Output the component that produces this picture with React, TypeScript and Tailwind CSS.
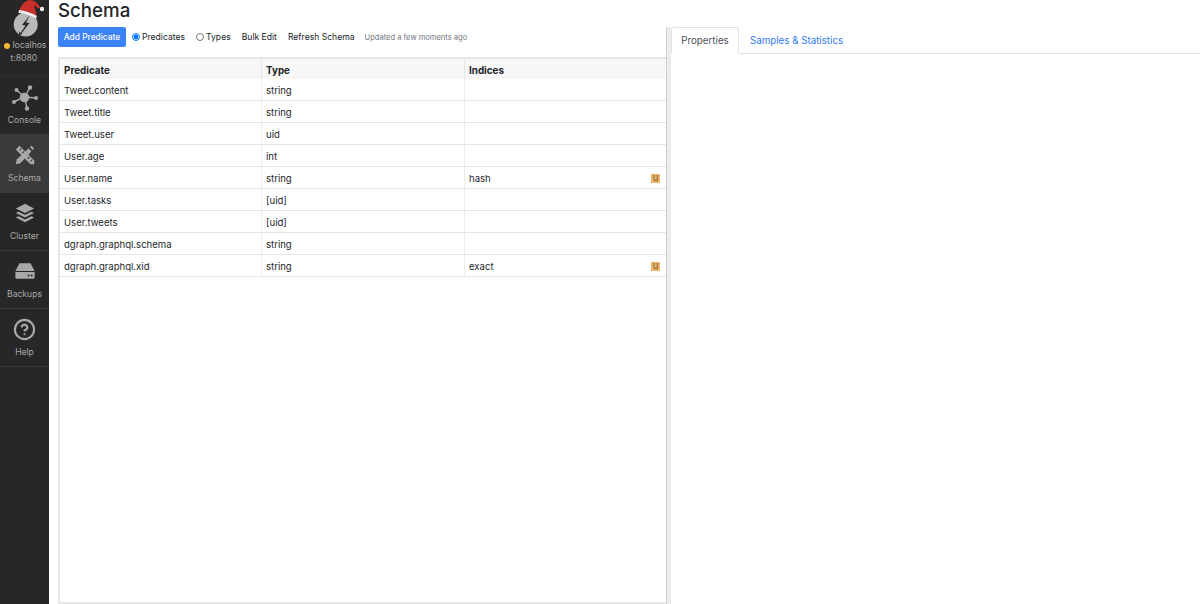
import { HelpCircle } from 'lucide-react';

const rows = [
    { predicate: 'Tweet.content', type: 'string', indices: '' },
    { predicate: 'Tweet.title', type: 'string', indices: '' },
    { predicate: 'Tweet.user', type: 'uid', indices: '' },
    { predicate: 'User.age', type: 'int', indices: '' },
    { predicate: 'User.name', type: 'string', indices: 'hash', upsert: true },
    { predicate: 'User.tasks', type: '[uid]', indices: '' },
    { predicate: 'User.tweets', type: '[uid]', indices: '' },
    { predicate: 'dgraph.graphql.schema', type: 'string', indices: '' },
    { predicate: 'dgraph.graphql.xid', type: 'string', indices: 'exact', upsert: true },
];

function Logo() {
    return (
        <svg viewBox="0 0 48 40" className="w-[48px] h-[40px] block" aria-hidden>
            <circle cx="24.7" cy="24.5" r="12" fill="#b8b8b8" />
            <path d="M29 15 L21 25 L24.5 25.5 L19.5 33 L18 31.5 L18 35 L21 34.5 L20.5 33.5 L28.5 23 L25 22.5 Z" fill="#2a2a2a" />
            <path d="M18 11 C20 5 24 0 29 0 C33 0 37 3 39.5 8 L36.5 8 C35 6 33.5 5.5 33 6 C34 9 35 12 35.5 16 Z" fill="#c9302c" />
            <path d="M18 10 C24 10.5 30 12.5 36 16 L35 18.5 C29 15 23.5 13.5 17.5 13 Z" fill="#ececec" />
            <circle cx="41" cy="9" r="2.2" fill="#ececec" />
        </svg>
    );
}

function ConsoleIcon() {
    return (
        <svg viewBox="0 0 26 26" className="w-[26px] h-[26px] mt-[1px]" fill="#a8a8a8" stroke="#a8a8a8" aria-hidden>
            <path d="M12.5 12 L18 2.5 M12.5 12 L24 13 M12.5 12 L15 23.5 M12.5 12 L1.5 17 M12.5 12 L4.5 5" strokeWidth="1.4" />
            <circle cx="12.5" cy="12.5" r="4.8" stroke="none" />
            <circle cx="18" cy="2.5" r="2.2" stroke="none" />
            <circle cx="24" cy="13" r="2" stroke="none" />
            <circle cx="15" cy="23.5" r="2.2" stroke="none" />
            <circle cx="2" cy="17" r="2" stroke="none" />
            <circle cx="4.5" cy="5" r="2" stroke="none" />
        </svg>
    );
}

function SchemaIcon() {
    return (
        <svg viewBox="0 0 24 24" className="w-[22px] h-[22px]" fill="#a8a8a8" aria-hidden>
            <path d="M2 6 L6 2 L22 18 L22 22 L18 22 Z" />
            <path d="M22 5 L19 2 L3 17 L2 22 L7 21 Z" />
            <path d="M17 3 L21 7 L19.5 8.5 L15.5 4.5 Z" fill="#3a3a3a" />
            <path d="M8 5 L6 7 M11 8 L9 10 M17 14 L15 16 M20 17 L18 19" stroke="#3a3a3a" strokeWidth="1.2" />
        </svg>
    );
}

function ClusterIcon() {
    return (
        <svg viewBox="0 0 24 24" className="w-[22px] h-[22px]" fill="#a8a8a8" aria-hidden>
            <path d="M12 2 L22 7 L12 12 L2 7 Z" />
            <path d="M5 10.5 L12 14 L19 10.5 L22 12 L12 17 L2 12 Z" />
            <path d="M5 15.5 L12 19 L19 15.5 L22 17 L12 22 L2 17 Z" />
        </svg>
    );
}

function BackupsIcon() {
    return (
        <svg viewBox="0 0 24 24" className="w-[22px] h-[22px]" aria-hidden>
            <path d="M6 3.5 H18 L22.5 12 H1.5 Z" fill="#a8a8a8" />
            <path d="M1.5 13 H22.5 V19 Q22.5 20.5 21 20.5 H3 Q1.5 20.5 1.5 19 Z" fill="#a8a8a8" />
            <circle cx="16" cy="16.8" r="1.1" fill="#262626" />
            <circle cx="19.3" cy="16.8" r="1.1" fill="#262626" />
        </svg>
    );
}

function NavItem({ label, active, children }: { label: string; active?: boolean; children: React.ReactNode }) {
    return (
        <div className={`h-[58px] flex flex-col items-center pt-[8px] border-b border-[#3b3b3b] ${active ? 'bg-[#3a3a3a]' : ''}`}>
            <div className="h-[24px] flex items-center justify-center">{children}</div>
            <span className="mt-[5px] text-[8.6px] leading-[12px] text-[#a8a8a8]">{label}</span>
        </div>
    );
}

function Sidebar() {
    return (
        <div className="w-[49px] shrink-0 bg-[#272727] flex flex-col">
            <div className="h-[77px] border-b border-[#303030] flex flex-col items-center">
                <Logo />
                <div className="w-[48px] -mt-[1px] text-[8.6px] leading-[13px] text-[#a8a8a8] whitespace-nowrap">
                    <div className="flex items-center pl-[3px]">
                        <span className="w-[6px] h-[6px] rounded-full bg-[#f5b82e] mr-[3px]" />
                        localhos
                    </div>
                    <div className="pl-[10px]">t:8080</div>
                </div>
            </div>
            <NavItem label="Console"><ConsoleIcon /></NavItem>
            <NavItem label="Schema" active><SchemaIcon /></NavItem>
            <NavItem label="Cluster"><ClusterIcon /></NavItem>
            <NavItem label="Backups"><BackupsIcon /></NavItem>
            <NavItem label="Help"><HelpCircle className="w-[23px] h-[23px] text-[#a8a8a8]" strokeWidth={2.2} /></NavItem>
        </div>
    );
}

function Toolbar() {
    return (
        <div className="h-[20px] flex items-center text-[8.6px] text-[#212529] whitespace-nowrap">
            <button className="h-[20px] w-[68px] rounded-[2px] bg-[#3b82f6] text-white text-[8.4px] font-medium pt-[1px]">Add Predicate</button>
            <input type="radio" defaultChecked className="ml-[6px] w-[8px] h-[8px]" />
            <span className="ml-[2px] pt-[1px]">Predicates</span>
            <input type="radio" className="ml-[11px] w-[8px] h-[8px]" />
            <span className="ml-[2px] pt-[1px]">Types</span>
            <span className="ml-[11px] pt-[1px]">Bulk Edit</span>
            <span className="ml-[11px] pt-[1px]">Refresh Schema</span>
            <span className="ml-[10px] pt-[1px] text-[7.55px] text-[#6c757d]">Updated a few moments ago</span>
        </div>
    );
}

function SchemaTable() {
    return (
        <div className="mt-[10px] flex-1 border-2 border-[#e6e6e6] border-r-0 min-h-0">
            <div className="flex h-[20px] items-center bg-[#f7f7f7] font-bold text-[9.85px] text-[#212529]">
                <div className="w-[202px] pl-[4px] pt-[2px] h-full flex items-center border-r border-[#e6e6e6]">Predicate</div>
                <div className="w-[203px] pl-[4px] pt-[2px] h-full flex items-center border-r border-[#e6e6e6]">Type</div>
                <div className="flex-1 pl-[4px] pt-[2px]">Indices</div>
            </div>
            {rows.map(row => (
                <div key={row.predicate} className="flex h-[22px] items-center text-[9.55px] text-[#212529] border-b border-[#e6e6e6]">
                    <div className="w-[202px] pl-[4px] pt-[3px] h-full flex items-center border-r border-[#eeeeee]">{row.predicate}</div>
                    <div className="w-[203px] pl-[4px] pt-[3px] h-full flex items-center border-r border-[#eeeeee]">{row.type}</div>
                    <div className="flex-1 h-full pl-[4px] pr-[6px] flex items-center justify-between">
                        <span className="pt-[3px]">{row.indices}</span>
                        {row.upsert && (
                            <span className="mt-[1px] w-[9px] h-[9px] bg-[#ecb36a] text-[#5c4016] text-[7px] leading-[9px] text-center">U</span>
                        )}
                    </div>
                </div>
            ))}
        </div>
    );
}

export default function App() {
    return (
        <div className="h-[604px] w-[1200px] flex overflow-hidden bg-white font-['Inter',sans-serif]">
            <Sidebar />
            <div className="w-[617px] shrink-0 pl-[9px] flex flex-col">
                <h1 className="h-[27px] text-[18.7px] leading-[22px] font-medium text-[#212529]">Schema</h1>
                <Toolbar />
                <SchemaTable />
            </div>
            <div className="w-[5px] shrink-0 mt-[27px] bg-[#ececec] border-l border-[#d0d0d0]" />
            <div className="flex-1 pt-[27px]">
                <div className="flex h-[27px] border-b border-[#e2e2e2] text-[9.75px]">
                    <div className="h-[27px] w-[68px] pt-[2px] flex items-center justify-center border border-[#e2e2e2] border-b-white rounded-t-[3px] text-[#495057] bg-white">Properties</div>
                    <div className="h-[27px] pl-[11px] pt-[2px] flex items-center text-[#2f7bf0]">Samples &amp; Statistics</div>
                </div>
            </div>
        </div>
    );
}
